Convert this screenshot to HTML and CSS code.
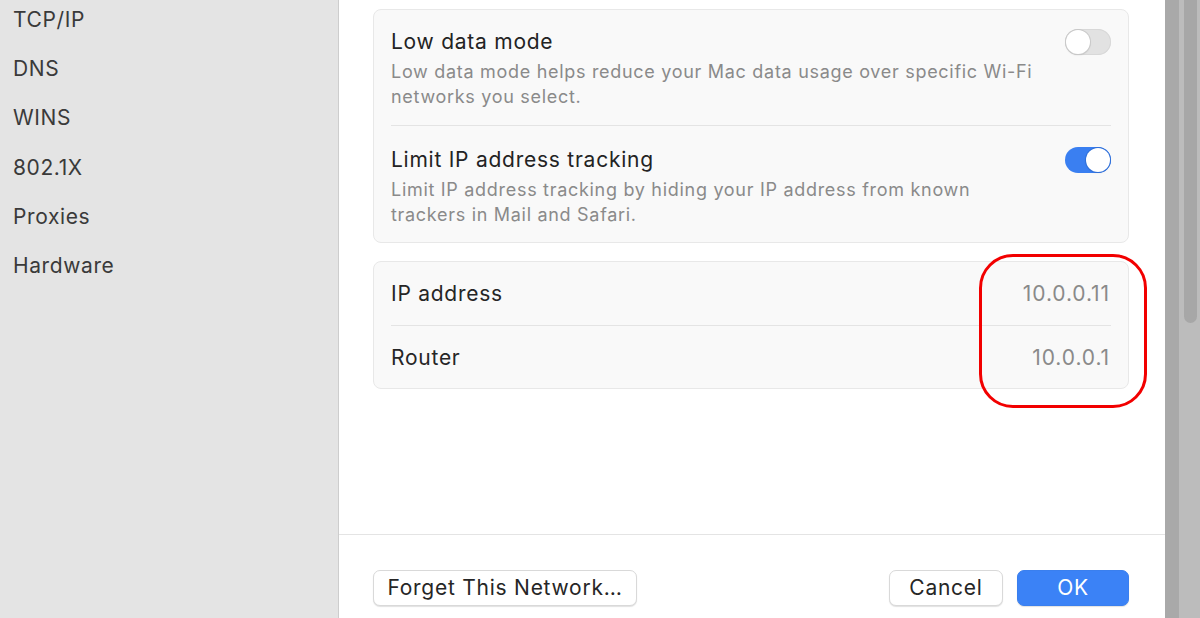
FILE: index.html
```html
<!DOCTYPE html>
<html>
<head>
<meta charset="utf-8">
<link rel="stylesheet" href="styles.css">
</head>
<body>
<div class="window">
  <aside class="sidebar">
    <ul class="nav">
      <li>TCP/IP</li>
      <li>DNS</li>
      <li>WINS</li>
      <li>802.1X</li>
      <li>Proxies</li>
      <li>Hardware</li>
    </ul>
  </aside>
  <main class="main">
    <div class="content">
      <section class="card">
        <div class="row">
          <div class="text">
            <div class="title">Low data mode</div>
            <div class="desc">Low data mode helps reduce your Mac data usage over specific Wi-Fi networks you select.</div>
          </div>
          <span class="toggle"><span class="knob"></span></span>
        </div>
        <div class="row">
          <div class="text">
            <div class="title">Limit IP address tracking</div>
            <div class="desc">Limit IP address tracking by hiding your IP address from known trackers in Mail and Safari.</div>
          </div>
          <span class="toggle on"><span class="knob"></span></span>
        </div>
      </section>
      <section class="card info">
        <div class="kv"><span class="key">IP address</span><span class="val">10.0.0.11</span></div>
        <div class="kv"><span class="key">Router</span><span class="val">10.0.0.1</span></div>
        <div class="highlight"></div>
      </section>
    </div>
    <footer class="footer">
      <button class="btn forget">Forget This Network…</button>
      <div class="spacer"></div>
      <button class="btn cancel">Cancel</button>
      <button class="btn ok">OK</button>
    </footer>
  </main>
  <div class="edge"><div class="thumb"></div></div>
</div>
</body>
</html>
```

FILE: styles.css
```css
* { box-sizing: border-box; }
html, body { margin: 0; padding: 0; }
body {
  width: 1200px;
  height: 618px;
  overflow: hidden;
  font-family: "Inter", "Liberation Sans", sans-serif;
  color: #262626;
  background: #fff;
}
.window {
  display: flex;
  height: 618px;
}
.sidebar {
  width: 339px;
  flex: none;
  background: #e4e4e4;
  border-right: 1px solid #cdcdcd;
}
.nav {
  list-style: none;
  margin: -5px 0 0 0;
  padding: 0 0 0 13px;
}
.nav li {
  height: 49.2px;
  line-height: 49.2px;
  font-size: 21px;
  letter-spacing: 0.6px;
  color: #3a3a3a;
}
.main {
  width: 826px;
  flex: none;
  display: flex;
  flex-direction: column;
  background: #fff;
}
.content {
  height: 534px;
  flex: none;
  padding: 9px 36px 0 34px;
}
.card {
  position: relative;
  background: #f9f9f9;
  border: 1px solid #e8e8e8;
  border-radius: 8px;
  padding: 0 17px;
}
.row {
  display: flex;
  align-items: flex-start;
  padding: 19px 0 16px;
}
.row + .row {
  border-top: 1px solid #e4e4e4;
  padding: 21px 0 15px;
}
.text { flex: 1; }
.title {
  font-size: 21px;
  line-height: 26px;
  letter-spacing: 0.75px;
  color: #232323;
}
.desc {
  margin-top: 4px;
  font-size: 18px;
  line-height: 25px;
  letter-spacing: 0.7px;
  color: #8a8a8a;
  max-width: 648px;
}
.toggle {
  flex: none;
  position: relative;
  width: 46px;
  height: 26px;
  border-radius: 13px;
  background: #e2e2e2;
  box-shadow: inset 0 0 0 1px #d8d8d8;
  margin-top: 0;
}
.toggle .knob {
  position: absolute;
  top: 1px;
  left: 1px;
  width: 24px;
  height: 24px;
  border-radius: 50%;
  background: #fff;
  box-shadow: 0 0 0 1px #c9c9c9, 0 1px 2px rgba(0,0,0,0.15);
}
.toggle.on {
  background: #3a7ff1;
  box-shadow: none;
}
.toggle.on .knob {
  left: 21px;
  box-shadow: 0 0 0 1px #2f6fd8, 0 1px 2px rgba(0,0,0,0.1);
}
.info { margin-top: 18px; }
.kv {
  display: flex;
  justify-content: space-between;
  align-items: center;
  height: 63px;
  font-size: 21px;
  letter-spacing: 0.75px;
}
.kv + .kv { border-top: 1px solid #e4e4e4; }
.key { color: #262626; }
.val { color: #8a8a8a; letter-spacing: 0.9px; margin-right: 1px; }
.highlight {
  position: absolute;
  left: 605px;
  top: -8px;
  width: 168px;
  height: 154px;
  border: 3px solid #f20000;
  border-radius: 34px;
  pointer-events: none;
}
.footer {
  flex: 1;
  border-top: 1px solid #e4e4e4;
  display: flex;
  align-items: flex-start;
  padding: 35px 36px 0 34px;
}
.spacer { flex: 1; }
.btn {
  font-family: inherit;
  font-size: 21px;
  letter-spacing: 0.75px;
  height: 36px;
  border-radius: 7px;
  border: 1px solid #d9d9d9;
  background: #fff;
  color: #262626;
  box-shadow: 0 1px 1px rgba(0,0,0,0.12);
  padding: 0;
  line-height: 32px;
}
.forget { width: 264px; }
.cancel { width: 114px; margin-right: 14px; }
.ok {
  width: 112px;
  background: #3b82f6;
  border-color: #3a7fee;
  color: #fff;
}
.edge {
  flex: 1;
  position: relative;
  background: linear-gradient(to right, #a9a9a9 0, #a9a9a9 14px, #bcbcbc 14px, #bcbcbc 100%);
}
.thumb {
  position: absolute;
  left: 19px;
  top: -10px;
  width: 13px;
  height: 333px;
  border-radius: 7px;
  background: #a7a7a7;
}
```
